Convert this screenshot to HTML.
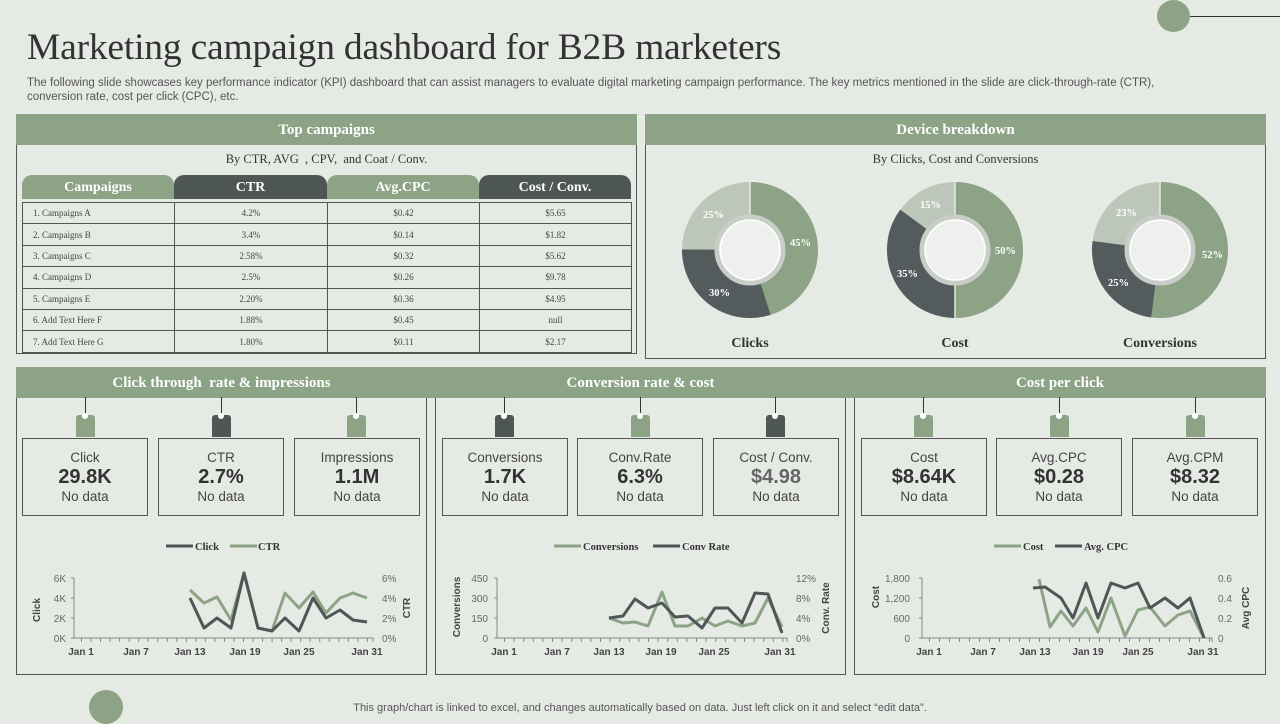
<!DOCTYPE html>
<html><head><meta charset="utf-8"><style>
*{margin:0;padding:0;box-sizing:border-box}
body{width:1280px;height:720px;background:#e6eae5;position:relative;overflow:hidden;font-family:"Liberation Sans",sans-serif;color:#333}
.a{position:absolute}
.serif{font-family:"Liberation Serif",serif}
.hdr{position:absolute;background:#8ca386;color:#fff;font-family:"Liberation Serif",serif;font-weight:bold;font-size:15px;text-align:center;line-height:33px;height:31px}
.box{position:absolute;border:1px solid #555}
.tab{position:absolute;top:175px;height:24px;border-radius:10px 10px 0 0;color:#fff;font-family:"Liberation Serif",serif;font-weight:bold;font-size:14px;text-align:center;line-height:25px}
table{position:absolute;left:22px;top:202px;width:609px;border-collapse:collapse;table-layout:fixed;font-family:"Liberation Serif",serif;font-size:9px;color:#444}
td{border:1.5px solid #555;height:21.4px;text-align:center;padding:0}
td:first-child{text-align:left;padding-left:10px}
.kpi{position:absolute;top:438px;width:126px;height:78px;border:1px solid #555;text-align:center;color:#444}
.kpi .l{font-size:13.5px;margin-top:11px;line-height:16px}
.kpi .v{font-size:20px;font-weight:bold;line-height:22px;color:#333}
.kpi .n{font-size:13.5px;line-height:18px}
.tag{position:absolute;top:415px;width:19px;height:22px;border-radius:3px 3px 0 0}
.tag:before{content:"";position:absolute;left:9px;top:-18px;width:1px;height:18px;background:#333}
.tag:after{content:"";position:absolute;left:6px;top:-2px;width:6px;height:6px;border-radius:50%;background:#fff}
.g{background:#8ca386}.d{background:#4f5656}
</style></head><body>
<div class="a" style="left:1157px;top:0;width:33px;height:32px;border-radius:50%;background:#8ca386"></div>
<div class="a" style="left:1190px;top:16px;width:90px;height:1px;background:#333"></div>
<div class="a" style="left:89px;top:690px;width:34px;height:34px;border-radius:50%;background:#8ca386"></div>

<div class="a serif" style="left:27px;top:26px;font-size:37.5px;color:#333;letter-spacing:-0.2px">Marketing campaign dashboard for B2B marketers</div>
<div class="a" style="left:27px;top:76px;width:1185px;font-size:11.5px;line-height:14px;color:#555">The following slide showcases key performance indicator (KPI) dashboard that can assist managers to evaluate digital marketing campaign performance. The key metrics mentioned in the slide are click-through-rate (CTR), conversion rate, cost per click (CPC), etc.</div>

<!-- Top campaigns -->
<div class="box" style="left:16px;top:114px;width:621px;height:240px"></div>
<div class="hdr" style="left:16px;top:114px;width:621px">Top campaigns</div>
<div class="a serif" style="left:16px;top:152px;width:621px;text-align:center;font-size:12.5px;color:#333">By CTR, AVG &nbsp;, CPV, &nbsp;and Coat / Conv.</div>
<div class="tab g" style="left:22px;width:152px">Campaigns</div>
<div class="tab d" style="left:174px;width:153px">CTR</div>
<div class="tab g" style="left:327px;width:152px">Avg.CPC</div>
<div class="tab d" style="left:479px;width:152px">Cost / Conv.</div>
<table>
<colgroup><col style="width:152px"><col style="width:153px"><col style="width:152px"><col style="width:152px"></colgroup>
<tr><td>1. Campaigns A</td><td>4.2%</td><td>$0.42</td><td>$5.65</td></tr>
<tr><td>2. Campaigns B</td><td>3.4%</td><td>$0.14</td><td>$1.82</td></tr>
<tr><td>3. Campaigns C</td><td>2.58%</td><td>$0.32</td><td>$5.62</td></tr>
<tr><td>4. Campaigns D</td><td>2.5%</td><td>$0.26</td><td>$9.78</td></tr>
<tr><td>5. Campaigns E</td><td>2.20%</td><td>$0.36</td><td>$4.95</td></tr>
<tr><td>6. Add Text Here F</td><td>1.88%</td><td>$0.45</td><td>null</td></tr>
<tr><td>7. Add Text Here G</td><td>1.80%</td><td>$0.11</td><td>$2.17</td></tr>
</table>

<!-- Device -->
<div class="box" style="left:645px;top:114px;width:621px;height:245px"></div>
<div class="hdr" style="left:645px;top:114px;width:621px">Device breakdown</div>
<div class="a serif" style="left:645px;top:152px;width:621px;text-align:center;font-size:12.5px;color:#333">By Clicks, Cost and Conversions</div>
<svg class="a" style="left:0;top:0" width="1280" height="720">
<g fill="none" stroke-width="35">
<g transform="rotate(-90 750 250)"><circle cx="750" cy="250" r="50.5" stroke="#bcc7b9"/>
<circle cx="750" cy="250" r="50.5" stroke="#8ca386" stroke-dasharray="142.8 400"/>
<circle cx="750" cy="250" r="50.5" stroke="#545b5c" stroke-dasharray="95.2 400" stroke-dashoffset="-142.8"/></g>
<g transform="rotate(-90 955 250)"><circle cx="955" cy="250" r="50.5" stroke="#bcc7b9"/>
<circle cx="955" cy="250" r="50.5" stroke="#8ca386" stroke-dasharray="158.6 400"/>
<circle cx="955" cy="250" r="50.5" stroke="#545b5c" stroke-dasharray="111 400" stroke-dashoffset="-158.6"/></g>
<g transform="rotate(-90 1160 250)"><circle cx="1160" cy="250" r="50.5" stroke="#bcc7b9"/>
<circle cx="1160" cy="250" r="50.5" stroke="#8ca386" stroke-dasharray="165 400"/>
<circle cx="1160" cy="250" r="50.5" stroke="#545b5c" stroke-dasharray="79.3 400" stroke-dashoffset="-165"/></g>
</g>
<g stroke="#e6eae5" stroke-width="1.5">
<line x1="750" y1="182" x2="750" y2="217"/><line x1="955" y1="182" x2="955" y2="318"/><line x1="1160" y1="182" x2="1160" y2="217"/>
</g>
<g fill="#eef0ed" stroke="#c8cdc7" stroke-width="5">
<circle cx="750" cy="250" r="33"/><circle cx="955" cy="250" r="33"/><circle cx="1160" cy="250" r="33"/></g>
<g fill="none" stroke="#fff" stroke-width="1.5">
<circle cx="750" cy="250" r="30"/><circle cx="955" cy="250" r="30"/><circle cx="1160" cy="250" r="30"/></g>
<g fill="#fff" font-family="Liberation Serif" font-weight="bold" font-size="10.5">
<text x="790" y="246">45%</text><text x="709" y="296">30%</text><text x="703" y="218">25%</text>
<text x="995" y="254">50%</text><text x="897" y="277">35%</text><text x="920" y="208">15%</text>
<text x="1202" y="258">52%</text><text x="1108" y="286">25%</text><text x="1116" y="216">23%</text>
</g>
<g fill="#333" font-family="Liberation Serif" font-weight="bold" font-size="14" text-anchor="middle">
<text x="750" y="347">Clicks</text><text x="955" y="347">Cost</text><text x="1160" y="347">Conversions</text></g>
</svg>

<!-- bottom panels -->
<div class="box" style="left:16px;top:367px;width:411px;height:308px"></div>
<div class="box" style="left:435px;top:367px;width:411px;height:308px"></div>
<div class="box" style="left:854px;top:367px;width:412px;height:308px"></div>
<div class="hdr" style="left:16px;top:367px;width:1250px;height:31px"></div>
<div class="hdr" style="left:16px;top:367px;width:411px">Click through &nbsp;rate &amp; impressions</div>
<div class="hdr" style="left:435px;top:367px;width:411px">Conversion rate &amp; cost</div>
<div class="hdr" style="left:854px;top:367px;width:412px">Cost per click</div>

<div class="tag g" style="left:76px"></div><div class="tag d" style="left:212px"></div><div class="tag g" style="left:347px"></div>
<div class="tag d" style="left:495px"></div><div class="tag g" style="left:631px"></div><div class="tag d" style="left:766px"></div>
<div class="tag g" style="left:914px"></div><div class="tag g" style="left:1050px"></div><div class="tag g" style="left:1186px"></div>

<div class="kpi" style="left:22px"><div class="l">Click</div><div class="v">29.8K</div><div class="n">No data</div></div>
<div class="kpi" style="left:158px"><div class="l">CTR</div><div class="v">2.7%</div><div class="n">No data</div></div>
<div class="kpi" style="left:294px"><div class="l">Impressions</div><div class="v">1.1M</div><div class="n">No data</div></div>
<div class="kpi" style="left:442px"><div class="l">Conversions</div><div class="v">1.7K</div><div class="n">No data</div></div>
<div class="kpi" style="left:577px"><div class="l">Conv.Rate</div><div class="v">6.3%</div><div class="n">No data</div></div>
<div class="kpi" style="left:713px"><div class="l">Cost / Conv.</div><div class="v" style="color:#666">$4.98</div><div class="n">No data</div></div>
<div class="kpi" style="left:861px"><div class="l">Cost</div><div class="v">$8.64K</div><div class="n">No data</div></div>
<div class="kpi" style="left:996px"><div class="l">Avg.CPC</div><div class="v">$0.28</div><div class="n">No data</div></div>
<div class="kpi" style="left:1132px"><div class="l">Avg.CPM</div><div class="v">$8.32</div><div class="n">No data</div></div>

<svg class="a" style="left:0;top:0" width="1280" height="720" font-family="Liberation Sans">
<g font-family="Liberation Serif" font-weight="bold" font-size="10.5" fill="#333">
<line x1="166" y1="546" x2="193" y2="546" stroke="#4f5656" stroke-width="3"/><text x="195" y="550">Click</text>
<line x1="230" y1="546" x2="257" y2="546" stroke="#8ca386" stroke-width="3"/><text x="258" y="550">CTR</text>
<line x1="554" y1="546" x2="581" y2="546" stroke="#8ca386" stroke-width="3"/><text x="583" y="550">Conversions</text>
<line x1="653" y1="546" x2="680" y2="546" stroke="#4f5656" stroke-width="3"/><text x="682" y="550">Conv Rate</text>
<line x1="994" y1="546" x2="1021" y2="546" stroke="#8ca386" stroke-width="3"/><text x="1023" y="550">Cost</text>
<line x1="1055" y1="546" x2="1082" y2="546" stroke="#4f5656" stroke-width="3"/><text x="1084" y="550">Avg. CPC</text>
</g>
<g font-size="10" fill="#666">
<text x="66" y="582" text-anchor="end">6K</text><text x="66" y="602" text-anchor="end">4K</text><text x="66" y="622" text-anchor="end">2K</text><text x="66" y="642" text-anchor="end">0K</text>
<text x="382" y="582">6%</text><text x="382" y="602">4%</text><text x="382" y="622">2%</text><text x="382" y="642">0%</text>
<text x="488" y="582" text-anchor="end">450</text><text x="488" y="602" text-anchor="end">300</text><text x="488" y="622" text-anchor="end">150</text><text x="488" y="642" text-anchor="end">0</text>
<text x="796" y="582">12%</text><text x="796" y="602">8%</text><text x="796" y="622">4%</text><text x="796" y="642">0%</text>
<text x="910" y="582" text-anchor="end">1,800</text><text x="910" y="602" text-anchor="end">1,200</text><text x="910" y="622" text-anchor="end">600</text><text x="910" y="642" text-anchor="end">0</text>
<text x="1218" y="582">0.6</text><text x="1218" y="602">0.4</text><text x="1218" y="622">0.2</text><text x="1218" y="642">0</text>
</g>
<g font-size="10" font-weight="bold" fill="#444" text-anchor="middle">
<text x="81" y="655">Jan 1</text><text x="136" y="655">Jan 7</text><text x="190" y="655">Jan 13</text><text x="245" y="655">Jan 19</text><text x="299" y="655">Jan 25</text><text x="367" y="655">Jan 31</text>
<text x="504" y="655">Jan 1</text><text x="557" y="655">Jan 7</text><text x="609" y="655">Jan 13</text><text x="661" y="655">Jan 19</text><text x="714" y="655">Jan 25</text><text x="780" y="655">Jan 31</text>
<text x="929" y="655">Jan 1</text><text x="983" y="655">Jan 7</text><text x="1035" y="655">Jan 13</text><text x="1088" y="655">Jan 19</text><text x="1138" y="655">Jan 25</text><text x="1203" y="655">Jan 31</text>
<text transform="translate(40 610) rotate(-90)">Click</text>
<text transform="translate(410 608) rotate(-90)">CTR</text>
<text transform="translate(460 607) rotate(-90)">Conversions</text>
<text transform="translate(829 608) rotate(-90)">Conv. Rate</text>
<text transform="translate(879 597) rotate(-90)">Cost</text>
<text transform="translate(1249 608) rotate(-90)">Avg CPC</text>
</g>
<g stroke="#888" stroke-width="1" fill="none">
<path d="M74 578V638H373V642M74 578h-3M74 598h-3M74 618h-3M74 638h-3"/>
<path d="M497 578V638H787V642M497 578h-3M497 598h-3M497 618h-3M497 638h-3"/>
<path d="M922 578V638H1212V642M922 578h-3M922 598h-3M922 618h-3M922 638h-3"/>
</g>
<g stroke="#888" stroke-width="1">
<line x1="81" y1="640" x2="373" y2="640" stroke-width="4" stroke-dasharray="1 8.53"/>
<line x1="504" y1="640" x2="787" y2="640" stroke-width="4" stroke-dasharray="1 8.6"/>
<line x1="929" y1="640" x2="1212" y2="640" stroke-width="4" stroke-dasharray="1 9"/>
</g>
<g fill="none" stroke-width="3" stroke-linejoin="round">
<polyline stroke="#8ca386" points="190,590 204,603 217,597 231,620 244,573 258,628 272,631 285,593 299,608 313,592 326,613 340,598 353,593 367,598"/>
<polyline stroke="#4f5656" points="190,598 204,628 217,618 231,628 244,573 258,628 272,631 285,618 299,631 313,598 326,618 340,610 353,620 367,622"/>
<polyline stroke="#8ca386" points="609,618 623,623 635,622 648,626 662,592 675,626 688,626 702,618 715,626 728,621 742,626 755,623 768,598 782,627"/>
<polyline stroke="#4f5656" points="609,618 623,616 635,599 648,608 662,603 675,617 688,616 702,628 715,608 728,608 742,623 755,593 768,594 782,633"/>
<polyline stroke="#8ca386" points="1039,579 1050,627 1061,611 1073,626 1086,608 1098,632 1111,598 1125,636 1138,610 1150,607 1165,626 1178,615 1190,611 1204,638"/>
<polyline stroke="#4f5656" points="1033,588 1045,587 1061,598 1073,618 1086,583 1098,618 1111,583 1125,588 1138,583 1150,608 1165,598 1178,608 1190,598 1204,638"/>
</g>
</svg>

<div class="a" style="left:0;top:702px;width:1280px;text-align:center;font-size:11px;color:#555">This graph/chart is linked to excel, and changes automatically based on data. Just left click on it and select “edit data”.</div>
</body></html>
